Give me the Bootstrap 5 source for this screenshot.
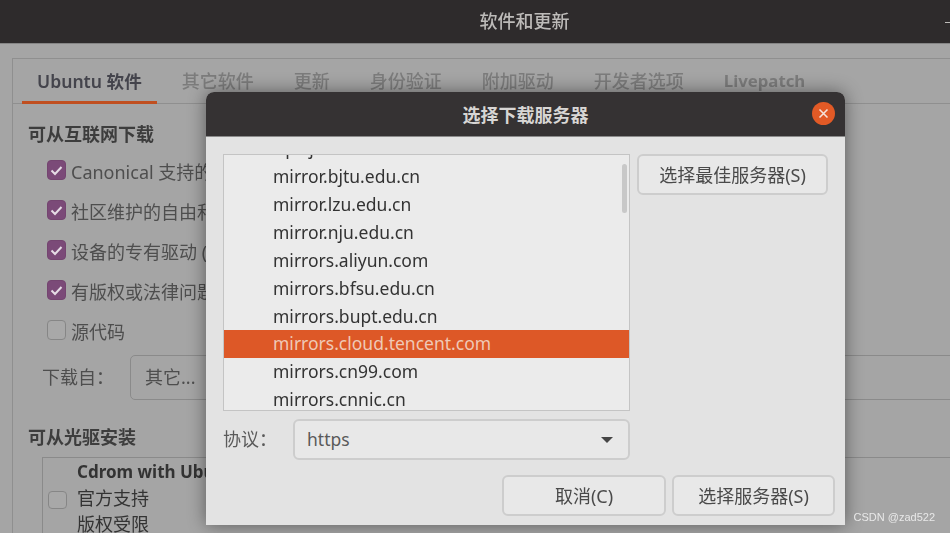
<!DOCTYPE html>
<html lang="zh-CN">
<head>
    <meta charset="UTF-8">
    <meta name="viewport" content="width=device-width, initial-scale=1.0">
    <title>软件和更新</title>
    <link href="https://cdn.jsdelivr.net/npm/bootstrap@5.3.3/dist/css/bootstrap.min.css" rel="stylesheet">
    <script src="https://cdn.jsdelivr.net/npm/bootstrap@5.3.3/dist/js/bootstrap.bundle.min.js"></script>
    <style>
        html, body {
            height: 100%;
            overflow: hidden;
        }
        body {
            background-color: #a5a5a5;
            font-family: "Noto Sans", "Noto Sans CJK SC", sans-serif;
            font-size: 18px;
            color: #4e4e4e;
        }
        .stage {
            position: relative;
            width: 950px;
            height: 533px;
            overflow: hidden;
            filter: blur(0.5px);
        }
        .main-title {
            height: 44px;
            padding-left: 99px;
            background-color: #2e2b2c;
            border-bottom: 1px solid #858585;
            color: #bdbbb9;
            font-weight: 500;
        }
        .min-mark {
            position: absolute;
            right: 0;
            top: 22px;
            width: 5px;
            height: 1px;
            background-color: #bdbbb9;
        }
        .notebook {
            margin: 14px 0 0 12px;
            width: 1000px;
            height: 520px;
            border: 1px solid #8f8f8f;
        }
        .tab-strip {
            height: 45px;
            border-bottom: 1px solid #8f8f8f;
            padding-left: 9px;
            gap: 10px;
        }
        .tab-item {
            padding: 0 15px;
            line-height: 44px;
            height: 45px;
            color: #7c7c7c;
            font-weight: 500;
            white-space: nowrap;
        }
        .tab-item.on {
            color: #44444c;
            font-size: 17.6px;
            font-weight: 600;
            border-bottom: 3px solid #c04f20;
        }
        .tab-en {
            font-size: 16.8px;
            font-weight: 700;
        }
        .page-pane {
            padding: 18px 0 0 15px;
        }
        .sec-title {
            margin: 0 0 6px;
            font-size: 18px;
            font-weight: 700;
            color: #3d3d3d;
            line-height: 24px;
        }
        .sec-title.cd-title {
            margin: 25px 0 0;
        }
        .opt-row {
            height: 40px;
            padding-left: 19px;
            gap: 5px;
            white-space: nowrap;
        }
        .opt-row .tick {
            margin-top: -4px;
        }
        .tick {
            flex: none;
            width: 19px;
            height: 20px;
            border-radius: 4px;
            background-color: #7b4a78;
            border: 1px solid #744570;
        }
        .tick.off {
            background-color: #a8a8a8;
            border-color: #868686;
        }
        .from-row {
            margin: 3px 0 0 14px;
            height: 45px;
            gap: 16px;
            white-space: nowrap;
        }
        .from-box {
            width: 1000px;
            height: 45px;
            padding-left: 14px;
            border: 1px solid #8a8a8a;
            border-radius: 5px;
        }
        .cd-box {
            margin: 8px 0 0 14px;
            width: 1000px;
            height: 100px;
            border: 1px solid #8a8a8a;
            padding: 1px 0 0 5px;
            gap: 10px;
            color: #333;
            line-height: 26px;
            white-space: nowrap;
        }
        .cd-box .tick {
            margin-top: 32px;
            height: 18px;
        }
        .cd-name {
            font-size: 17px;
            font-weight: 700;
        }
        .dialog-win {
            position: absolute;
            left: 206px;
            top: 92px;
            width: 639px;
            height: 433px;
            background-color: #e3e3e3;
            border-radius: 8px 8px 0 0;
            box-shadow: 0 0 18px rgba(0, 0, 0, 0.45);
            color: #4a4a4a;
        }
        .dialog-head {
            position: relative;
            height: 45px;
            padding-top: 3px;
            background-color: #353233;
            border-radius: 8px 8px 0 0;
            border-bottom: 1px solid #8b8b8b;
            color: #d8d6d4;
            font-weight: 700;
        }
        .close-dot {
            position: absolute;
            right: 10px;
            top: 10px;
            width: 23px;
            height: 23px;
            border-radius: 50%;
            background-color: #e25a26;
        }
        .dialog-body {
            padding: 17px 17px 0;
            gap: 8px;
        }
        .mirror-list {
            position: relative;
            width: 407px;
            height: 257px;
            overflow: hidden;
            background-color: #ebebeb;
            border: 1px solid #c4c4c4;
            border-radius: 0;
        }
        .mirror-rows {
            margin-top: -20px;
        }
        .mirror-rows .list-group-item {
            height: 28px;
            padding: 0 0 0 49px;
            background-color: transparent;
            border: 0;
            border-radius: 0;
            font-size: 17.5px;
            line-height: 26px;
            color: #333;
            white-space: nowrap;
        }
        .mirror-rows .list-group-item.active {
            background-color: #dd5827;
            color: #efc9b6;
        }
        .list-thumb {
            position: absolute;
            right: 2px;
            top: 9px;
            width: 5px;
            height: 49px;
            background-color: #c8c8c8;
            border-radius: 3px;
        }
        .gtk-btn {
            height: 41px;
            padding: 0;
            font-size: 18px;
            color: #4a4a4a;
            background-color: #e8e8e8;
            border: 2px solid #cdcdcd;
            border-radius: 6px;
            line-height: 36px;
        }
        .best-btn {
            width: 191px;
            margin-left: -1px;
        }
        .proto-row {
            margin: 8px 0 0 17px;
            width: 407px;
            height: 41px;
            gap: 16px;
            color: #5a5a5a;
        }
        .proto-select {
            position: relative;
            width: 337px;
            height: 41px;
            padding-left: 12px;
            background-color: #e8e8e8;
            border: 2px solid #cdcdcd;
            border-radius: 6px;
            font-size: 17.5px;
            line-height: 36px;
        }
        .caret-down {
            position: absolute;
            right: 15px;
            top: 16px;
            width: 0;
            height: 0;
            border-left: 6px solid transparent;
            border-right: 6px solid transparent;
            border-top: 6px solid #454545;
        }
        .dialog-foot {
            margin-top: 15px;
            padding-right: 10px;
            gap: 6px;
        }
        .foot-btn {
            width: 164px;
        }
        .foot-btn.ok-btn {
            width: 163px;
        }
        .mark-csdn {
            position: absolute;
            right: 15px;
            bottom: 8px;
            font-family: "Liberation Sans", sans-serif;
            font-size: 11px;
            color: #e8e8e8;
        }
    </style>
</head>
<body>
    <div class="stage">
        <div class="main-title d-flex align-items-center justify-content-center">软件和更新</div>
        <div class="min-mark"></div>

        <div class="notebook">
            <div class="tab-strip d-flex">
                <div class="tab-item on">Ubuntu 软件</div>
                <div class="tab-item">其它软件</div>
                <div class="tab-item">更新</div>
                <div class="tab-item">身份验证</div>
                <div class="tab-item">附加驱动</div>
                <div class="tab-item">开发者选项</div>
                <div class="tab-item tab-en">Livepatch</div>
            </div>
            <div class="page-pane">
                <h2 class="sec-title">可从互联网下载</h2>
                <div class="opt-row d-flex align-items-center"><span class="tick d-flex align-items-center justify-content-center"><svg width="13" height="11" viewBox="0 0 13 11"><path d="M1.5 5.5 L5 9 L11.5 2" fill="none" stroke="#e6dce6" stroke-width="2"/></svg></span>Canonical 支持的免费和开源软件 (main)</div>
                <div class="opt-row d-flex align-items-center"><span class="tick d-flex align-items-center justify-content-center"><svg width="13" height="11" viewBox="0 0 13 11"><path d="M1.5 5.5 L5 9 L11.5 2" fill="none" stroke="#e6dce6" stroke-width="2"/></svg></span>社区维护的自由和开源软件 (universe)</div>
                <div class="opt-row d-flex align-items-center"><span class="tick d-flex align-items-center justify-content-center"><svg width="13" height="11" viewBox="0 0 13 11"><path d="M1.5 5.5 L5 9 L11.5 2" fill="none" stroke="#e6dce6" stroke-width="2"/></svg></span>设备的专有驱动 (restricted)</div>
                <div class="opt-row d-flex align-items-center"><span class="tick d-flex align-items-center justify-content-center"><svg width="13" height="11" viewBox="0 0 13 11"><path d="M1.5 5.5 L5 9 L11.5 2" fill="none" stroke="#e6dce6" stroke-width="2"/></svg></span>有版权或法律问题的软件 (multiverse)</div>
                <div class="opt-row d-flex align-items-center"><span class="tick off"></span>源代码</div>
                <div class="from-row d-flex align-items-center">
                    <span>下载自：</span>
                    <div class="from-box d-flex align-items-center">其它...</div>
                </div>
                <h2 class="sec-title cd-title">可从光驱安装</h2>
                <div class="cd-box d-flex align-items-start">
                    <span class="tick off"></span>
                    <div>
                        <div class="cd-name">Cdrom with Ubuntu 20.04</div>
                        <div>官方支持</div>
                        <div>版权受限</div>
                    </div>
                </div>
            </div>
        </div>

        <div class="dialog-win">
            <div class="dialog-head d-flex align-items-center justify-content-center">
                选择下载服务器
                <span class="close-dot d-flex align-items-center justify-content-center">
                    <svg width="11" height="11" viewBox="0 0 11 11"><path d="M1.5 1.5 L9.5 9.5 M9.5 1.5 L1.5 9.5" stroke="#f6e3da" stroke-width="1.6" fill="none"/></svg>
                </span>
            </div>
            <div class="dialog-body d-flex align-items-start">
                <div class="mirror-list">
                    <div class="mirror-rows list-group">
                        <div class="list-group-item">ftp.sjtu.edu.cn</div>
                        <div class="list-group-item">mirror.bjtu.edu.cn</div>
                        <div class="list-group-item">mirror.lzu.edu.cn</div>
                        <div class="list-group-item">mirror.nju.edu.cn</div>
                        <div class="list-group-item">mirrors.aliyun.com</div>
                        <div class="list-group-item">mirrors.bfsu.edu.cn</div>
                        <div class="list-group-item">mirrors.bupt.edu.cn</div>
                        <div class="list-group-item active">mirrors.cloud.tencent.com</div>
                        <div class="list-group-item">mirrors.cn99.com</div>
                        <div class="list-group-item">mirrors.cnnic.cn</div>
                    </div>
                    <div class="list-thumb"></div>
                </div>
                <button type="button" class="btn gtk-btn best-btn">选择最佳服务器(S)</button>
            </div>
            <div class="proto-row d-flex align-items-center">
                <span>协议：</span>
                <div class="proto-select">https<span class="caret-down"></span></div>
            </div>
            <div class="dialog-foot d-flex justify-content-end">
                <button type="button" class="btn gtk-btn foot-btn">取消(C)</button>
                <button type="button" class="btn gtk-btn foot-btn ok-btn">选择服务器(S)</button>
            </div>
        </div>

        <div class="mark-csdn">CSDN @zad522</div>
    </div>
</body>
</html>
